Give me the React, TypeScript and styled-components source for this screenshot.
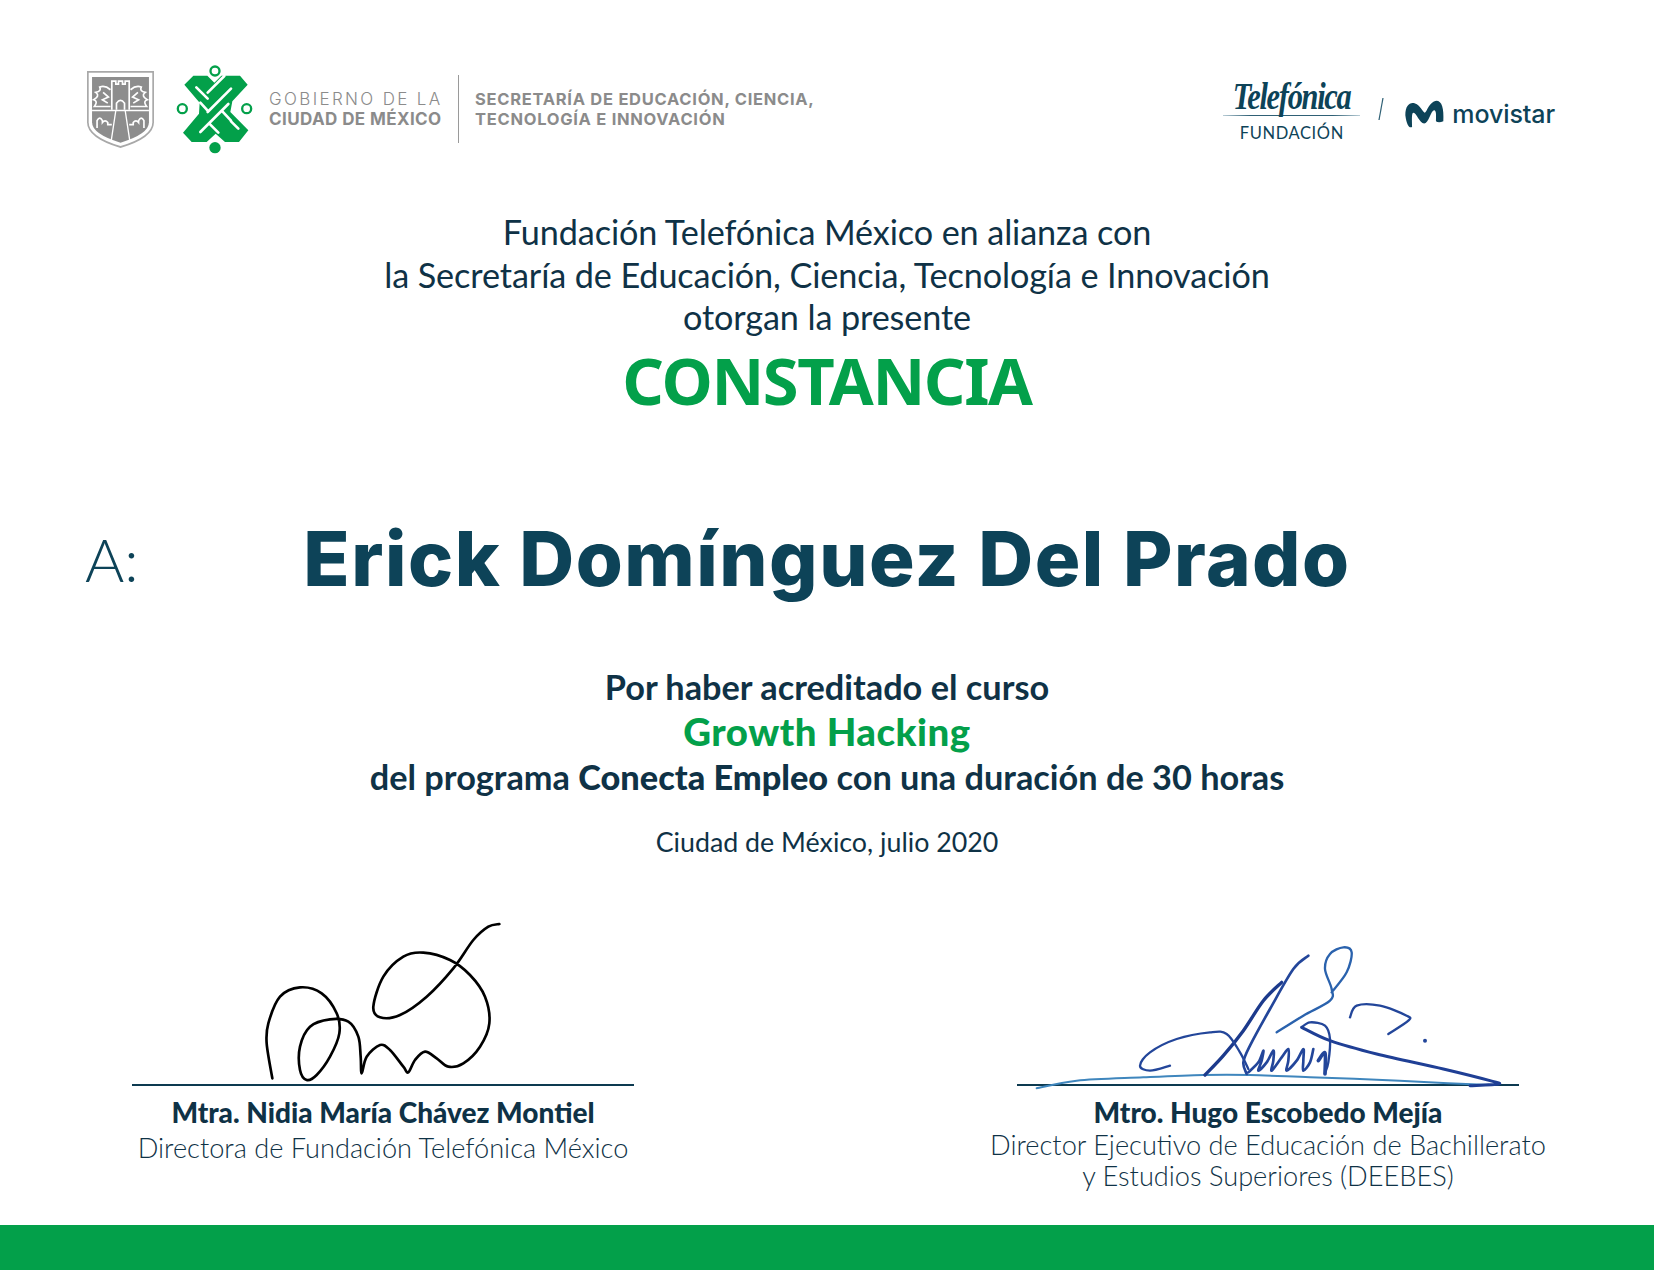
import React from "react";
import styled, { createGlobalStyle } from "styled-components";

const Global = createGlobalStyle`
  html, body { margin: 0; padding: 0; background: #fff; }
  body { font-family: "Lato", "Noto Sans", sans-serif; }
`;

const Page = styled.div`
  width: 1654px; height: 1270px; display: flex; flex-direction: column; overflow: hidden; color: #0b3044;
`;
const Header = styled.header`
  height: 170px; padding: 62px 99px 0 87px; box-sizing: border-box; display: flex; justify-content: space-between; align-items: flex-start;
`;
const LogoRow = styled.div` display: flex; align-items: center; `;
const KnotWrap = styled.div` margin-left: 21px; display: flex; `;
const GovText = styled.div`
  margin-left: 12px; width: 172px; color: #8b8b8b; font-family: "Inter", sans-serif; font-size: 17px; line-height: 20px; white-space: nowrap;
`;
const GovLight = styled.div` font-weight: 300; letter-spacing: 2.35px; `;
const GovBold = styled.div` font-weight: 700; letter-spacing: 0.4px; `;
const Divider = styled.div` width: 1px; height: 68px; background: #9a9a9a; margin: 0 16px 0 17px; `;
const SecText = styled.div`
  color: #8b8b8b; font-family: "Inter", sans-serif; font-weight: 700; font-size: 16.5px; line-height: 20px; white-space: nowrap; letter-spacing: 0.72px;
`;
const BrandRow = styled.div` display: flex; align-items: flex-start; margin-top: 15px; `;
const TelefonicaBox = styled.div` width: 137px; display: flex; flex-direction: column; align-items: center; `;
const Script = styled.div`
  font-family: "Liberation Serif", serif; font-style: italic; font-weight: 700; font-size: 38px; line-height: 38px; color: #0d4358; letter-spacing: -1.6px; height: 38px; white-space: nowrap; transform: scaleX(0.8);
`;
const BrandRule = styled.div`
  width: 137px; height: 1px; background: linear-gradient(90deg, #b9cdd6, #2f6075 20%, #2f6075 80%, #b9cdd6);
`;
const Fundacion = styled.div`
  margin-top: 7px; font-family: "Lato", sans-serif; font-size: 16.5px; line-height: 20px; letter-spacing: 0.6px; color: #0d4358;
`;
const Slash = styled.div` width: 12px; margin: 21px 18px 0 15px; `;
const MovistarBox = styled.div` display: flex; align-items: center; margin-top: 22px; gap: 8px; `;
const MovistarWord = styled.div`
  font-family: "Inter", sans-serif; font-weight: 500; font-size: 25px; line-height: 30px; color: #0d4358; letter-spacing: -0.1px;
`;

const Center = styled.div` text-align: center; `;
const Intro = styled.div`
  font-size: 34.2px; line-height: 42.5px; margin-top: 41px; color: #0f3246; text-align: center; letter-spacing: -0.1px;
`;
const Title = styled.h1`
  margin: 2px 0 0; height: 78px; font-family: "Noto Sans", sans-serif; font-weight: 700; font-size: 65px; line-height: 78px; color: #03a04a; text-align: center; letter-spacing: -1.4px;
`;
const NameRow = styled.div`
  display: flex; align-items: center; height: 110px; margin-top: 84px; position: relative;
`;
const Prefix = styled.div`
  position: absolute; left: 85px; top: 20px; font-size: 60px; line-height: 72px; font-weight: 300; color: #0d4358;
`;
const Name = styled.div`
  width: 100%; text-align: center; font-family: "Inter", sans-serif; font-weight: 800; font-size: 76px; line-height: 110px; color: #0d4358; letter-spacing: 1.5px;
`;
const Course = styled(Center)`
  margin-top: 51px; font-size: 34.3px; line-height: 45px; font-weight: 700;
`;
const CourseLine = styled.div` font-weight: 700; color: #0f3246; `;
const Strong = styled.b` font-weight: 900; `;
const CourseName = styled.div` font-weight: 900; color: #03a04a; font-size: 38.4px; letter-spacing: 0.5px; `;
const Place = styled(Center)` margin-top: 23px; font-size: 26.8px; line-height: 40px; color: #0f3246; `;
const Signatures = styled.div`
  margin-top: 0; display: grid; grid-template-columns: 502px 502px; column-gap: 383px; padding-left: 132px; flex: 1;
`;
const SignBlock = styled.div` display: flex; flex-direction: column; align-items: center; position: relative; `;
const SignArea = styled.div` width: 100%; height: 222px; border-bottom: 2px solid #0d3a50; box-sizing: content-box; `;
const SignSvg = styled.svg<{ $left: number; $top: number }>`
  position: absolute; left: ${p => p.$left}px; top: ${p => p.$top}px;
`;
const Signer = styled.div` font-weight: 900; font-size: 28px; line-height: 36px; margin-top: 8px; color: #0f3246; white-space: nowrap; `;
const Role = styled.div<{ $tight?: boolean }>`
  font-weight: 300; font-size: 27.2px; line-height: ${p => (p.$tight ? 32 : 36)}px; color: #0f3246; white-space: nowrap; text-align: center;
  margin-top: ${p => (p.$tight ? -1 : 0)}px;
`;
const Footer = styled.footer` height: 45px; background: #03a04a; flex: none; `;

function spline(pts: number[][]) {
  let d = `M${pts[0][0]} ${pts[0][1]}`;
  for (let i = 0; i < pts.length - 1; i++) {
    const p0 = pts[Math.max(0, i - 1)], p1 = pts[i], p2 = pts[i + 1], p3 = pts[Math.min(pts.length - 1, i + 2)];
    d += ` C${p1[0] + (p2[0] - p0[0]) / 6} ${p1[1] + (p2[1] - p0[1]) / 6} ${p2[0] - (p3[0] - p1[0]) / 6} ${p2[1] - (p3[1] - p1[1]) / 6} ${p2[0]} ${p2[1]}`;
  }
  return d;
}

const Shield = () => (
  <svg width="67" height="77" viewBox="50 62 200 230">
    <path d="M50 62H250V215Q250 262 150 292Q50 262 50 215Z" fill="#a8a8a8" />
    <path d="M55 67H245V215Q245 258 150 286Q55 258 55 215Z" fill="#fff" />
    <path d="M65 80H235V215Q235 250 150 276Q65 250 65 215Z" fill="#8d8d8d" />
    <path d="M65 180H235" stroke="#fff" strokeWidth="4" />
    <path d="M124 178V92h12v9h8v-9h12v9h8v-9h12v86" fill="none" stroke="#fff" strokeWidth="5" />
    <path d="M138 178v-20q12-16 24 0v20" fill="none" stroke="#fff" strokeWidth="5" />
    <path d="M136 180L122 272M164 180L178 272" stroke="#fff" strokeWidth="4" />
    <path d="M120 118q-16-14-32-8q6 12-12 16q14 10-6 22q14 4 2 20h48M180 118q16-14 32-8q-6 12 12 16q-14 10 6 22q-14 4-2 20h-48" fill="none" stroke="#fff" strokeWidth="5" />
    <path d="M98 126l16 14-18 8 16 10M202 126l-16 14 18 8-16 10" fill="none" stroke="#fff" strokeWidth="5" />
    <path d="M80 232v-22q8-14 16 0v6q8-10 16 0v6h12M220 232v-22q-8-14-16 0v6q-8-10-16 0v6h-12" fill="none" stroke="#fff" strokeWidth="5" />
  </svg>
);

const Knot = () => (
  <svg width="82" height="94" viewBox="0 0 246 282">
    <circle cx="120" cy="27" r="13.5" fill="none" stroke="#03a04a" strokeWidth="7" />
    <circle cx="22" cy="140" r="13.5" fill="none" stroke="#03a04a" strokeWidth="7" />
    <circle cx="215" cy="140" r="13.5" fill="none" stroke="#03a04a" strokeWidth="7" />
    <circle cx="120" cy="257" r="17" fill="#03a04a" />
    <path d="M28 68L55 41H97L118 62L139 41H195L218 68L172 118L166 150L220 205L192 240H150L122 215L95 240H50L24 212L72 155L74 122Z" fill="#03a04a" />
    <path d="M148 42L98 92M168 80L98 150M160 126L76 210M64 76L98 110M76 122L100 148M168 178L190 200M106 188L130 212M140 146L168 176" fill="none" stroke="#fff" strokeWidth="8" strokeLinecap="round" />
  </svg>
);

const sig1 = [[97,505],[80,400],[85,340],[120,260],[180,232],[245,250],[290,310],[298,370],[270,440],[230,495],[200,510],[180,480],[180,410],[210,350],[270,328],[325,335],[355,380],[362,440],[365,490],[380,440],[420,405],[450,420],[490,470],[505,487],[525,450],[555,425],[590,445],[625,470],[670,460],[720,410],[748,340],[735,260],[690,195],[630,150],[550,128],[490,140],[430,200],[400,290],[420,322],[480,315],[560,260],[640,175],[700,90],[745,50],[778,42]];

const blue = "#23469a";
const strokes: [number[][], number, string][] = [
  [[[80,478],[200,455],[400,445],[580,438],[720,438],[900,445],[1100,452],[1300,462],[1440,468]], 6, "#3f86bd"],
  [[[585,438],[640,380],[700,305],[760,215],[815,160]], 10, "#1c3a8c"],
  [[[895,80],[850,120],[780,240],[720,350],[700,400],[710,435]], 8, blue],
  [[[480,410],[420,425],[390,410],[420,370],[500,330],[600,310],[650,315],[690,370],[715,420]], 7, blue],
  [[[800,310],[880,260],[960,215],[965,180],[945,120],[960,75],[1000,55],[1025,70],[1010,130],[965,190]], 7, "#2a62ad"],
  [[[875,295],[900,280],[945,290],[960,330],[955,400],[945,432]], 7, blue],
  [[[715,430],[745,400],[760,365],[755,395],[745,425],[770,400],[790,365],[790,395],[785,425],[815,385],[835,360],[835,395],[830,425],[860,395],[880,360],[880,395],[880,425],[900,400],[910,360]], 8, blue],
  [[[875,295],[960,335],[1100,375],[1300,420],[1440,455],[1465,465],[1380,470]], 9, "#1f3f95"],
  [[[1020,265],[1040,230],[1110,230],[1190,260],[1195,275],[1135,315]], 7, blue],
  [[[925,395],[945,372],[945,435]], 11, blue],
];

export default function App() {
  return (
    <Page>
      <Global />
      <Header>
        <LogoRow>
          <Shield />
          <KnotWrap><Knot /></KnotWrap>
          <GovText>
            <GovLight>GOBIERNO DE LA</GovLight>
            <GovBold>CIUDAD DE MÉXICO</GovBold>
          </GovText>
          <Divider />
          <SecText>
            SECRETARÍA DE EDUCACIÓN, CIENCIA,
            <br />
            TECNOLOGÍA E INNOVACIÓN
          </SecText>
        </LogoRow>
        <BrandRow>
          <TelefonicaBox>
            <Script>Telefónica</Script>
            <BrandRule />
            <Fundacion>FUNDACIÓN</Fundacion>
          </TelefonicaBox>
          <Slash>
            <svg width="12" height="22" viewBox="0 0 12 22"><path d="M8 0L4 22" stroke="#2f6075" strokeWidth="1.2" /></svg>
          </Slash>
          <MovistarBox>
            <svg width="39" height="29" viewBox="585 120 116 86">
              <path d="M586 165C586 135 600 125 615 130C630 135 638 155 644 158C650 155 657 125 678 122C695 122 701 145 699 183C690 187 682 187 677 183C678 165 678 150 672 150C662 150 655 190 642 190C628 190 620 158 610 158C604 158 606 180 606 200C598 205 590 195 586 165Z" fill="#0d4358" />
            </svg>
            <MovistarWord>movistar</MovistarWord>
          </MovistarBox>
        </BrandRow>
      </Header>
      <Intro>
        Fundación Telefónica México en alianza con
        <br />
        la Secretaría de Educación, Ciencia, Tecnología e Innovación
        <br />
        otorgan la presente
      </Intro>
      <Title>CONSTANCIA</Title>
      <NameRow>
        <Prefix>A:</Prefix>
        <Name>Erick Domínguez Del Prado</Name>
      </NameRow>
      <Course>
        <CourseLine>Por haber acreditado el curso</CourseLine>
        <CourseName>Growth Hacking</CourseName>
        <CourseLine>del programa <Strong>Conecta Empleo</Strong> con una duración de 30 horas</CourseLine>
      </Course>
      <Place>Ciudad de México, julio 2020</Place>
      <Signatures>
        <SignBlock>
          <SignArea />
          <SignSvg $left={108} $top={48} width="280" height="180" viewBox="0 0 840 540">
            <path d={spline(sig1)} fill="none" stroke="#000" strokeWidth="8" strokeLinecap="round" strokeLinejoin="round" />
          </SignSvg>
          <Signer>Mtra. Nidia María Chávez Montiel</Signer>
          <Role>Directora de Fundación Telefónica México</Role>
        </SignBlock>
        <SignBlock>
          <SignArea />
          <SignSvg $left={-7} $top={67} width="520" height="170" viewBox="0 0 1560 510">
            {strokes.map(([pts, w, c], i) => (
              <path key={i} d={spline(pts)} fill="none" stroke={c} strokeWidth={w} strokeLinecap="round" strokeLinejoin="round" />
            ))}
            <circle cx="1245" cy="335" r="6" fill={blue} />
          </SignSvg>
          <Signer>Mtro. Hugo Escobedo Mejía</Signer>
          <Role $tight>Director Ejecutivo de Educación de Bachillerato</Role>
          <Role $tight>y Estudios Superiores (DEEBES)</Role>
        </SignBlock>
      </Signatures>
      <Footer />
    </Page>
  );
}
